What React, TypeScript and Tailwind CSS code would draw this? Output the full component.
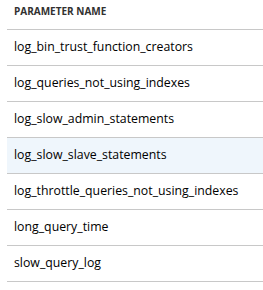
const PARAMS = [
  "log_bin_trust_function_creators",
  "log_queries_not_using_indexes",
  "log_slow_admin_statements",
  "log_slow_slave_statements",
  "log_throttle_queries_not_using_indexes",
  "long_query_time",
  "slow_query_log",
];

const SELECTED = "log_slow_slave_statements";

export default function App() {
  return (
    <div
      className="w-[263px] h-[290px] bg-white pl-[7px] overflow-hidden text-black"
      style={{ fontFamily: '"Open Sans", "Noto Sans", sans-serif' }}
    >
      {/* header */}
      <div className="h-[30px] border-b border-[#c8c8c8] pl-[7px] pt-[4px] text-[10px] font-bold text-[#323130]">
        PARAMETER NAME
      </div>

      {/* rows */}
      {PARAMS.map((p) => (
        <div
          key={p}
          className={`h-[36px] flex items-center border-b border-[#c8c8c8] pl-[7px] text-[12.3px] ${
            p === SELECTED ? "bg-[#eff6fc]" : ""
          }`}
        >
          {p}
        </div>
      ))}
    </div>
  );
}
